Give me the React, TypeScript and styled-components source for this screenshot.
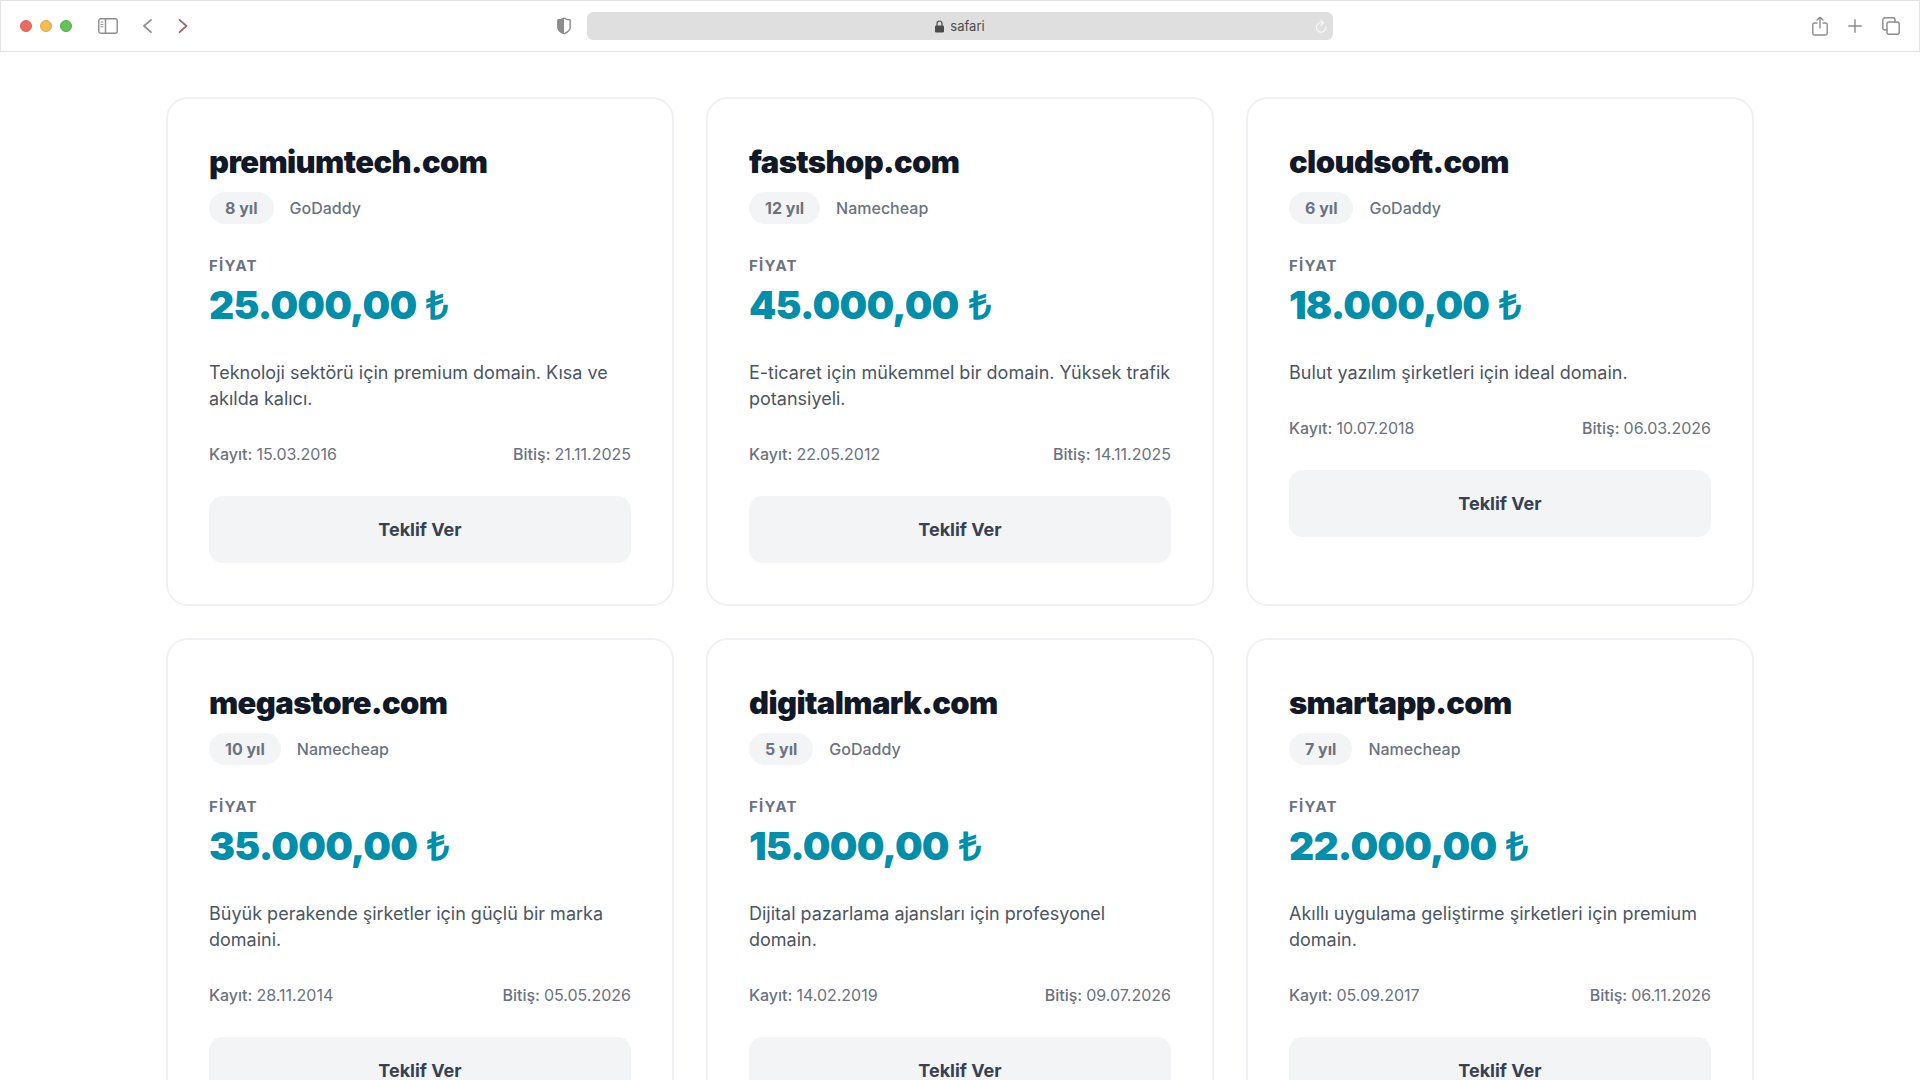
import React from "react";
import styled, { createGlobalStyle } from "styled-components";

const GlobalStyle = createGlobalStyle`
  *, *::before, *::after { box-sizing: border-box; }
  html { overflow: hidden; }
  body {
    margin: 0;
    background: #ffffff;
    font-family: Inter, "Liberation Sans", sans-serif;
    color: #111827;
    -webkit-font-smoothing: antialiased;
  }
  h2, p, dl, dt, dd { margin: 0; }
`;

const Window = styled.div`
  min-height: 100vh;
  background: #ffffff;
`;

const Toolbar = styled.header`
  display: grid;
  grid-template-columns: 1fr minmax(0, 746px) 1fr;
  align-items: center;
  gap: 16px;
  height: 52px;
  padding: 0 19px;
  border: 1px solid #e2e2e2;
`;

const ToolbarSide = styled.div<{ $end?: boolean }>`
  display: flex;
  align-items: center;
  justify-content: ${(p) => (p.$end ? "flex-end" : "space-between")};
  gap: 16px;
`;

const Group = styled.div<{ $gap: number }>`
  display: flex;
  align-items: center;
  gap: ${(p) => p.$gap}px;
`;

const Light = styled.span<{ $color: string; $edge: string }>`
  width: 12px;
  height: 12px;
  border-radius: 50%;
  background: ${(p) => p.$color};
  border: 1px solid ${(p) => p.$edge};
`;

const IconButton = styled.button<{ $color?: string }>`
  display: flex;
  padding: 0;
  border: 0;
  background: none;
  color: ${(p) => p.$color ?? "#8c8c8c"};
  cursor: pointer;
`;

const AddressBar = styled.div`
  display: grid;
  grid-template-columns: 1fr auto 1fr;
  align-items: center;
  height: 28px;
  padding: 0 6px;
  border-radius: 6px;
  background: #dfdfdf;
  color: #4c4c4c;
`;

const Address = styled.span`
  display: flex;
  grid-column: 2;
  align-items: center;
  gap: 6px;
  font-size: 13px;
  line-height: 16px;
`;

const Reload = styled(IconButton)`
  justify-self: end;
`;

const Grid = styled.main`
  display: grid;
  grid-template-columns: repeat(3, minmax(0, 1fr));
  gap: 32px;
  max-width: 1588px;
  margin: 0 auto;
  padding: 45px 0;
`;

const Card = styled.article`
  padding: 41px;
  border: 2px solid #f0f1f4;
  border-radius: 22px;
  background: #ffffff;
`;

const DomainName = styled.h2`
  font-size: 31px;
  font-weight: 900;
  line-height: 44px;
  letter-spacing: -0.02em;
`;

const Meta = styled.div`
  display: flex;
  align-items: center;
  gap: 16px;
  margin-top: 8px;
  color: #6b7280;
  font-size: 16px;
  font-weight: 500;
  line-height: 20px;
`;

const Age = styled.span`
  padding: 6px 16px;
  border-radius: 16px;
  background: #f3f4f6;
  font-weight: 700;
`;

const PriceLabel = styled.p`
  margin-top: 32px;
  color: #6b7280;
  font-size: 15px;
  font-weight: 700;
  line-height: 20px;
  letter-spacing: 0.08em;
`;

const Price = styled.p`
  display: flex;
  align-items: baseline;
  gap: 10px;
  margin-top: 6px;
  color: #008eab;
  font-size: 39px;
  font-weight: 900;
  line-height: 46px;
  letter-spacing: -0.02em;
`;

const Currency = styled.span`
  font-family: "Open Sans", sans-serif;
  font-weight: 800;
  line-height: 1;
`;

const Description = styled.p`
  margin-top: 32px;
  color: #4b5563;
  font-size: 18px;
  line-height: 26px;
`;

const Dates = styled.dl`
  display: flex;
  justify-content: space-between;
  margin-top: 32px;
  color: #6b7280;
  font-size: 16px;
  line-height: 20px;
`;

const DateItem = styled.div`
  display: flex;
  gap: 4px;

  dt { font-weight: 500; }
`;

const OfferButton = styled.button`
  display: block;
  width: 100%;
  margin-top: 32px;
  padding: 20px;
  border: 0;
  border-radius: 14px;
  background: #f3f4f6;
  color: #374151;
  font-family: inherit;
  font-size: 18px;
  font-weight: 700;
  line-height: 27px;
  cursor: pointer;
`;

type Domain = {
  name: string;
  age: string;
  registrar: string;
  price: string;
  description: string;
  registered: string;
  expires: string;
};

const domains: Domain[] = [
  { name: "premiumtech.com", age: "8 yıl", registrar: "GoDaddy", price: "25.000,00", description: "Teknoloji sektörü için premium domain. Kısa ve akılda kalıcı.", registered: "15.03.2016", expires: "21.11.2025" },
  { name: "fastshop.com", age: "12 yıl", registrar: "Namecheap", price: "45.000,00", description: "E-ticaret için mükemmel bir domain. Yüksek trafik potansiyeli.", registered: "22.05.2012", expires: "14.11.2025" },
  { name: "cloudsoft.com", age: "6 yıl", registrar: "GoDaddy", price: "18.000,00", description: "Bulut yazılım şirketleri için ideal domain.", registered: "10.07.2018", expires: "06.03.2026" },
  { name: "megastore.com", age: "10 yıl", registrar: "Namecheap", price: "35.000,00", description: "Büyük perakende şirketler için güçlü bir marka domaini.", registered: "28.11.2014", expires: "05.05.2026" },
  { name: "digitalmark.com", age: "5 yıl", registrar: "GoDaddy", price: "15.000,00", description: "Dijital pazarlama ajansları için profesyonel domain.", registered: "14.02.2019", expires: "09.07.2026" },
  { name: "smartapp.com", age: "7 yıl", registrar: "Namecheap", price: "22.000,00", description: "Akıllı uygulama geliştirme şirketleri için premium domain.", registered: "05.09.2017", expires: "06.11.2026" },
];

const stroke = {
  fill: "none",
  stroke: "currentColor",
  strokeWidth: 1.4,
  strokeLinecap: "round" as const,
  strokeLinejoin: "round" as const,
};

const SidebarIcon = () => (
  <svg width="20" height="16" viewBox="0 0 20 16" {...stroke}>
    <rect x="0.8" y="0.8" width="18.4" height="14.4" rx="2" />
    <path d="M7.5 1v14" />
    <path d="M3 4h2M3 6.4h2M3 8.8h2" strokeWidth="1" />
  </svg>
);

const ChevronIcon = ({ right }: { right?: boolean }) => (
  <svg width="10" height="16" viewBox="0 0 10 16" {...stroke} strokeWidth={1.7}>
    <path d={right ? "M1.5 1.8 8.5 8l-7 6.2" : "M8 1.8 1 8l7 6.2"} />
  </svg>
);

const ShieldIcon = () => (
  <svg width="14" height="18" viewBox="0 0 14 18" {...stroke}>
    <path d="M7 1.2C5.2 2.3 3 2.9.8 3v7.6c0 2.6 2.8 4.8 6.2 6.2 3.4-1.4 6.2-3.6 6.2-6.2V3C11 2.9 8.8 2.3 7 1.2Z" />
    <path d="M7 1.2C5.2 2.3 3 2.9.8 3v7.6c0 2.6 2.8 4.8 6.2 6.2Z" fill="currentColor" stroke="none" />
  </svg>
);

const LockIcon = () => (
  <svg width="9" height="13" viewBox="0 0 9 13" fill="none">
    <rect x="0" y="5.5" width="9" height="7" rx="1.2" fill="currentColor" />
    <path d="M2 6V3.5a2.5 2.5 0 0 1 5 0V6" stroke="currentColor" strokeWidth="1.2" />
  </svg>
);

const ReloadIcon = () => (
  <svg width="12" height="14" viewBox="0 0 12 14" {...stroke} strokeWidth={1.3}>
    <path d="M8.3 3.7H6A4.7 4.7 0 1 0 10.8 8" />
    <path d="M5.9 1.2 8.4 3.7 5.9 6.2" />
  </svg>
);

const ShareIcon = () => (
  <svg width="16" height="20" viewBox="0 0 16 20" {...stroke}>
    <path d="M5 7H2.5A1.7 1.7 0 0 0 .8 8.7v8.6A1.7 1.7 0 0 0 2.5 19h11a1.7 1.7 0 0 0 1.7-1.7V8.7A1.7 1.7 0 0 0 13.5 7H11" />
    <path d="M8 12V1.2M5 4l3-2.8L11 4" />
  </svg>
);

const PlusIcon = () => (
  <svg width="14" height="14" viewBox="0 0 14 14" {...stroke}>
    <path d="M7 .8v12.4M.8 7h12.4" />
  </svg>
);

const TabsIcon = () => (
  <svg width="18" height="18" viewBox="0 0 18 18" {...stroke}>
    <path d="M5 13H2.8a2 2 0 0 1-2-2V2.8a2 2 0 0 1 2-2H11a2 2 0 0 1 2 2V5" />
    <rect x="5" y="5" width="12.2" height="12.2" rx="2" />
  </svg>
);

const BrowserToolbar = () => (
  <Toolbar>
    <ToolbarSide>
      <Group $gap={26}>
        <Group $gap={8}>
          <Light $color="#ed6a5e" $edge="#dd6155" />
          <Light $color="#f4bd4f" $edge="#dfa943" />
          <Light $color="#61c454" $edge="#57ad46" />
        </Group>
        <Group $gap={25}>
          <IconButton aria-label="Sidebar"><SidebarIcon /></IconButton>
          <IconButton aria-label="Back"><ChevronIcon /></IconButton>
          <IconButton aria-label="Forward" $color="#a5636a"><ChevronIcon right /></IconButton>
        </Group>
      </Group>
      <IconButton aria-label="Privacy"><ShieldIcon /></IconButton>
    </ToolbarSide>
    <AddressBar>
      <Address><LockIcon />safari</Address>
      <Reload aria-label="Reload" $color="#f6f6f6"><ReloadIcon /></Reload>
    </AddressBar>
    <ToolbarSide $end>
      <Group $gap={20}>
        <IconButton aria-label="Share"><ShareIcon /></IconButton>
        <IconButton aria-label="New tab"><PlusIcon /></IconButton>
        <IconButton aria-label="Tabs"><TabsIcon /></IconButton>
      </Group>
    </ToolbarSide>
  </Toolbar>
);

const DomainCard = ({ domain }: { domain: Domain }) => (
  <Card>
    <DomainName>{domain.name}</DomainName>
    <Meta>
      <Age>{domain.age}</Age>
      <span>{domain.registrar}</span>
    </Meta>
    <PriceLabel>FİYAT</PriceLabel>
    <Price>{domain.price} <Currency>₺</Currency></Price>
    <Description>{domain.description}</Description>
    <Dates>
      <DateItem><dt>Kayıt:</dt><dd>{domain.registered}</dd></DateItem>
      <DateItem><dt>Bitiş:</dt><dd>{domain.expires}</dd></DateItem>
    </Dates>
    <OfferButton type="button">Teklif Ver</OfferButton>
  </Card>
);

export default function App() {
  return (
    <Window>
      <GlobalStyle />
      <BrowserToolbar />
      <Grid>
        {domains.map((domain) => (
          <DomainCard key={domain.name} domain={domain} />
        ))}
      </Grid>
    </Window>
  );
}
